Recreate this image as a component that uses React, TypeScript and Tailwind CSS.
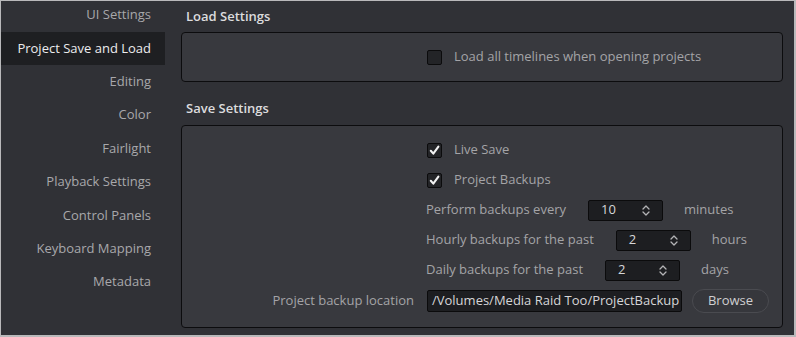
import React from "react";

const NAV = [
  "UI Settings",
  "Project Save and Load",
  "Editing",
  "Color",
  "Fairlight",
  "Playback Settings",
  "Control Panels",
  "Keyboard Mapping",
  "Metadata",
];

function Checkbox({ checked }: { checked?: boolean }) {
  return (
    <div className="w-[15px] h-[15px] rounded-[2px] bg-[#232427] border border-[#0b0b0c] flex items-center justify-center">
      {checked && (
        <svg width="11" height="11" viewBox="0 0 11 11">
          <path d="M1.8 5.8 L4.3 8.6 L9.4 1.6" fill="none" stroke="#f2f2f2" strokeWidth="2.1" strokeLinecap="round" strokeLinejoin="round" />
        </svg>
      )}
    </div>
  );
}

function Spinner({ value }: { value: string }) {
  return (
    <div className="w-[75px] h-[21px] bg-[#1d1e21] border border-[#0b0b0c] rounded-[2px] flex items-center justify-between pl-[12px] pr-[11px]">
      <span className="text-[#d6d6d8]">{value}</span>
      <svg width="10" height="13" viewBox="0 0 10 13">
        <path d="M2 5 L5 2 L8 5 M2 8 L5 11 L8 8" fill="none" stroke="#b4b4b6" strokeWidth="1.3" strokeLinecap="round" strokeLinejoin="round" />
      </svg>
    </div>
  );
}

function Row({ label, className, children }: { label?: string; className?: string; children: React.ReactNode }) {
  return (
    <div className={`flex items-center h-[30px] ${className ?? ""}`}>
      <div className="w-[245px] shrink-0 pr-[13px] text-right text-[#a4a4a7]">{label}</div>
      <div className="flex items-center">{children}</div>
    </div>
  );
}

function BackupRow({ label, value, unit }: { label: string; value: string; unit: string }) {
  return (
    <Row>
      <span className="text-[#a4a4a7] ml-[-1px]">{label}</span>
      <div className="ml-[22px]">
        <Spinner value={value} />
      </div>
      <span className="ml-[21px] text-[#a4a4a7]">{unit}</span>
    </Row>
  );
}

export default function App() {
  return (
    <div
      className="w-[796px] h-[337px] bg-[#303136] border-t border-l border-r-2 border-b-2 border-[#b9b9bb] flex overflow-hidden text-[13px]"
      style={{ fontFamily: '"Open Sans", "Liberation Sans", sans-serif' }}
    >
      {/* Sidebar */}
      <div className="w-[164px] shrink-0 flex flex-col mt-[-2.7px]">
        {NAV.map((item, i) => (
          <div
            key={item}
            className={
              i === 1
                ? "h-[33.4px] flex items-center justify-end pr-[14px] bg-[#1e1f22] text-[#ececee]"
                : "h-[33.4px] flex items-center justify-end pr-[14px] text-[#a8a8ab]"
            }
          >
            {item}
          </div>
        ))}
      </div>

      {/* Main */}
      <div className="flex-1 flex flex-col pl-[16px] pr-[11px]">
        <div className="h-[31px] flex items-center pl-[5px] text-[#dcdcde] font-semibold">Load Settings</div>
        <div className="h-[50px] bg-[#38393e] border border-[#0c0c0e] rounded-[4px] flex items-center">
          <Row>
            <Checkbox />
            <span className="ml-[12px] text-[#a4a4a7]">Load all timelines when opening projects</span>
          </Row>
        </div>

        <div className="h-[43px] flex items-center pt-[10px] pl-[5px] text-[#dcdcde] font-semibold">Save Settings</div>
        <div className="h-[203px] bg-[#38393e] border border-[#0c0c0e] rounded-[4px] flex flex-col pt-[9px]">
          <Row>
            <Checkbox checked />
            <span className="ml-[12px] text-[#a4a4a7]">Live Save</span>
          </Row>
          <Row>
            <Checkbox checked />
            <span className="ml-[12px] text-[#a4a4a7]">Project Backups</span>
          </Row>
          <BackupRow label="Perform backups every" value="10" unit="minutes" />
          <BackupRow label="Hourly backups for the past" value="2" unit="hours" />
          <BackupRow label="Daily backups for the past" value="2" unit="days" />
          <Row label="Project backup location" className="mt-[1px]">
            <div className="w-[255px] h-[22px] bg-[#1d1e21] border border-[#0b0b0c] rounded-[2px] flex items-center pl-[4px] text-[#d6d6d8] whitespace-nowrap overflow-hidden">
              /Volumes/Media Raid Too/ProjectBackup
            </div>
            <button className="ml-[10px] w-[77px] h-[24px] rounded-full border border-[#4a4b50] bg-[#36373c] text-[#cfcfd1]">
              Browse
            </button>
          </Row>
        </div>
      </div>
    </div>
  );
}
